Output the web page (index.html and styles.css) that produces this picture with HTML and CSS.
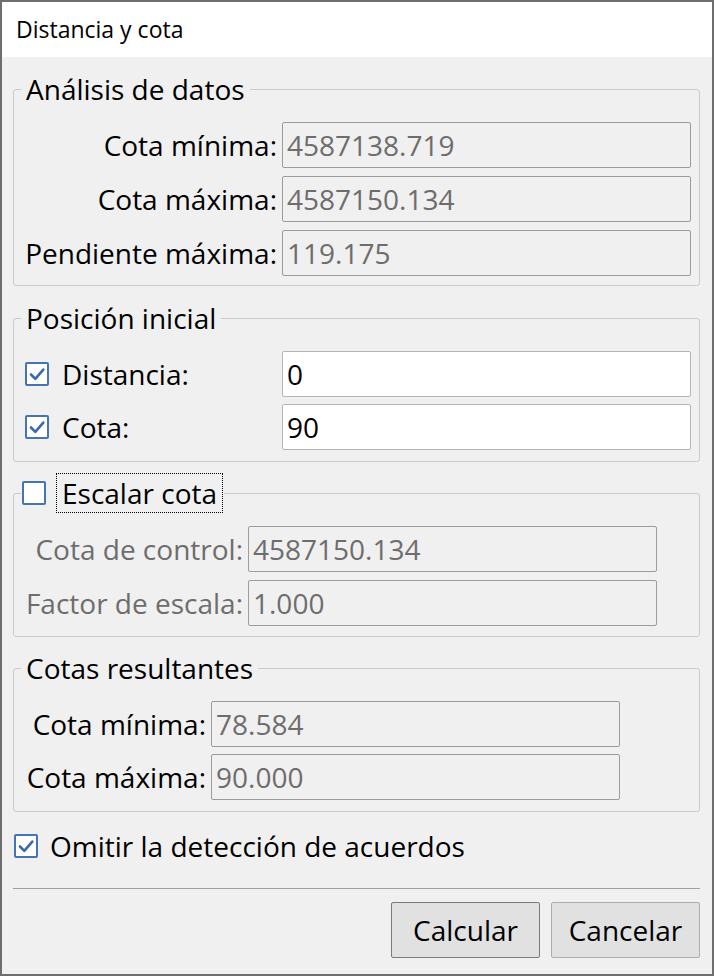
FILE: index.html
```html
<!DOCTYPE html>
<html lang="es">
<head>
<meta charset="utf-8">
<title>Distancia y cota</title>
<link rel="stylesheet" href="styles.css">
</head>
<body>
<div class="window">
  <header class="titlebar">Distancia y cota</header>
  <main class="content">
    <fieldset class="group group-analysis">
      <legend class="group-title">Análisis de datos</legend>
      <div class="form-grid grid-analysis">
        <span class="label">Cota mínima:</span><span class="field disabled">4587138.719</span>
        <span class="label">Cota máxima:</span><span class="field disabled">4587150.134</span>
        <span class="label">Pendiente máxima:</span><span class="field disabled">119.175</span>
      </div>
    </fieldset>

    <fieldset class="group group-start">
      <legend class="group-title">Posición inicial</legend>
      <div class="form-grid grid-start">
        <span class="check-label">
          <span class="checkbox checked"><svg viewBox="0 0 20 20"><path d="M4 10.5 L8.3 14.8 L16.3 5.6"/></svg></span>
          Distancia:
        </span><span class="field">0</span>
        <span class="check-label">
          <span class="checkbox checked"><svg viewBox="0 0 20 20"><path d="M4 10.5 L8.3 14.8 L16.3 5.6"/></svg></span>
          Cota:
        </span><span class="field">90</span>
      </div>
    </fieldset>

    <fieldset class="group group-scale">
      <legend class="group-title check-legend">
        <span class="checkbox"></span>
        <span class="focus-text">Escalar cota</span>
      </legend>
      <div class="form-grid grid-scale">
        <span class="label muted">Cota de control:</span><span class="field disabled">4587150.134</span>
        <span class="label muted">Factor de escala:</span><span class="field disabled">1.000</span>
      </div>
    </fieldset>

    <fieldset class="group group-result">
      <legend class="group-title">Cotas resultantes</legend>
      <div class="form-grid grid-result">
        <span class="label">Cota mínima:</span><span class="field disabled">78.584</span>
        <span class="label">Cota máxima:</span><span class="field disabled">90.000</span>
      </div>
    </fieldset>

    <div class="option-row">
      <span class="checkbox checked"><svg viewBox="0 0 20 20"><path d="M4 10.5 L8.3 14.8 L16.3 5.6"/></svg></span>
      <span>Omitir la detección de acuerdos</span>
    </div>

    <div class="separator"></div>

    <div class="actions">
      <button class="button default">Calcular</button>
      <button class="button">Cancelar</button>
    </div>
  </main>
</div>
</body>
</html>
```

FILE: styles.css
```css
* {
  box-sizing: border-box;
}

html,
body {
  margin: 0;
  padding: 0;
  background: #f0f0f0;
}

body {
  font-family: "Open Sans", "Noto Sans", sans-serif;
  color: #000;
}

.window {
  width: 714px;
  height: 976px;
  border: 2px solid #6e6e6e;
  background: #f0f0f0;
  display: flex;
  flex-direction: column;
}

/* Caption bar */
.titlebar {
  height: 55px;
  line-height: 55px;
  padding-left: 14px;
  background: #fff;
  font-size: 23px;
  white-space: nowrap;
}

.content {
  flex: 1;
  display: flex;
  flex-direction: column;
  padding: 14px 12px 0 11px;
  font-size: 28px;
}

/* Group boxes */
.group {
  margin: 0;
  min-width: 0;
  border: 1px solid #cbcbcb;
  border-radius: 3px;
  padding: 15px 9px 9px 0;
}

.group + .group {
  margin-top: 14px;
}

.group-title {
  margin-left: 7px;
  padding: 0 5px;
  line-height: 36px;
  white-space: nowrap;
}

.group-start {
  padding-bottom: 11px;
}

.group-scale {
  margin-top: 11px !important;
  padding-top: 13px;
  padding-bottom: 10px;
}

.group-result {
  margin-top: 13px !important;
  padding-bottom: 11px;
}

.check-legend {
  display: flex;
  align-items: center;
  gap: 10px;
  padding: 0 1px;
  line-height: normal;
}

.focus-text {
  border: 1px dotted #000;
  padding: 0 5px;
  line-height: 38px;
}

/* Label / field grids */
.form-grid {
  display: grid;
  grid-auto-rows: 46px;
  align-items: center;
  column-gap: 5px;
  row-gap: 7px;
}

.grid-analysis {
  grid-template-columns: 263px 409px;
  row-gap: 8px;
}

.grid-start {
  padding-left: 11px;
  grid-template-columns: 252px 409px;
}

.grid-scale {
  grid-template-columns: 229px 409px;
  row-gap: 8px;
}

.grid-result {
  grid-template-columns: 192px 409px;
}

.label {
  text-align: right;
  white-space: nowrap;
  line-height: 46px;
}

.label.muted {
  color: #6d6d6d;
}

.check-label {
  display: flex;
  align-items: center;
  gap: 13px;
  white-space: nowrap;
}

.field {
  height: 46px;
  line-height: 44px;
  padding-left: 4px;
  border: 1px solid #b4b4b4;
  border-radius: 2px;
  background: #fff;
  white-space: nowrap;
  overflow: hidden;
}

.field.disabled {
  background: #f0f0f0;
  border-color: #9c9c9c;
  color: #6d6d6d;
}

/* Check boxes */
.checkbox {
  flex: none;
  width: 24px;
  height: 24px;
  border: 2px solid #4574b4;
  border-radius: 2px;
  background: #fff;
  display: inline-flex;
}

.checkbox svg {
  width: 20px;
  height: 20px;
}

.checkbox path {
  fill: none;
  stroke: #3b68a8;
  stroke-width: 2.6;
  stroke-linecap: round;
  stroke-linejoin: round;
}

.option-row {
  display: flex;
  align-items: center;
  gap: 12px;
  margin-top: 16px;
  padding-left: 1px;
  height: 36px;
  white-space: nowrap;
}

.separator {
  margin-top: 24px;
  height: 1px;
  background: #a0a0a0;
}

/* Dialog buttons */
.actions {
  margin-top: 13px;
  display: flex;
  justify-content: flex-end;
  gap: 11px;
}

.button {
  width: 149px;
  height: 56px;
  font: inherit;
  color: #000;
  background: #e1e1e1;
  border: 1px solid #adadad;
  border-radius: 2px;
  padding: 0;
}

.button.default {
  border-color: #7a7a7a;
}
```
